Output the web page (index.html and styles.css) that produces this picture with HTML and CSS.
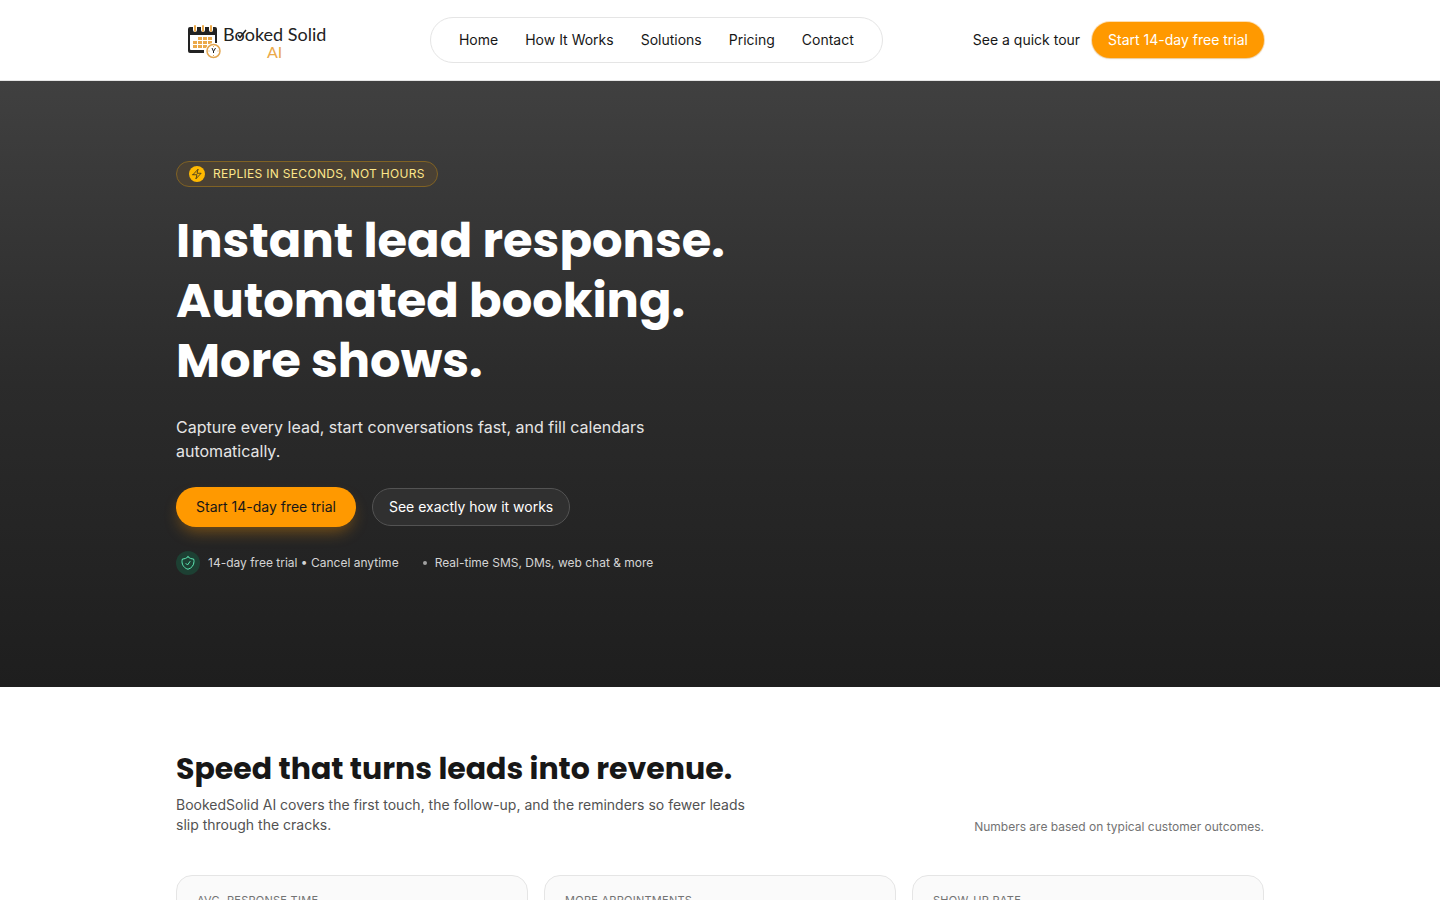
FILE: index.html
```html
<!DOCTYPE html>
<html lang="en">
<head>
    <meta charset="UTF-8">
    <meta name="viewport" content="width=device-width, initial-scale=1.0">
    <title>Booked Solid AI</title>
    <link rel="stylesheet" href="styles.css">
</head>
<body>
    <header class="site-header">
        <div class="container header-inner">
            <a class="logo" href="#" aria-label="Booked Solid AI">
                <svg width="164" height="48" viewBox="0 0 164 48">
                    <!-- calendar -->
                    <path d="M14 11h25a2 2 0 0 1 2 2v14h-2v-8H14v14a1 1 0 0 0 1 1h13v3H14a2 2 0 0 1-2-2V13a2 2 0 0 1 2-2z" fill="#222"/>
                    <path d="M19 9v5M27 9v5M35 9v5" stroke="#fff" stroke-width="4" stroke-linecap="round"/>
                    <path d="M19 10v5M27 10v5M35 10v5" stroke="#eba94a" stroke-width="2" stroke-linecap="round"/>
                    <path d="M22 21h4v3h-4zM27 21h4v3h-4zM32 21h4v3h-4zM17 25h4v3h-4zM22 25h4v3h-4zM27 25h4v3h-4zM32 25h4v3h-4zM17 29h4v3h-4zM22 29h4v3h-4zM27 29h4v3h-4z" fill="#eba94a"/>
                    <!-- clock -->
                    <circle cx="37.5" cy="35" r="8" fill="#fff"/>
                    <circle cx="37.5" cy="35" r="6.5" fill="#fff" stroke="#e3a650" stroke-width="1.5"/>
                    <path d="M37.5 30v1M37.5 39v1M32.5 35h1M41.5 35h1" stroke="#e3a650"/>
                    <path d="M36 32l1.5 3.5L39.5 32M37.5 35v2" fill="none" stroke="#222"/>
                    <text class="logo-name" x="47" y="25">Booked Solid</text>
                    <text class="logo-ai" x="91" y="42">AI</text>
                    <!-- tick in the first o -->
                    <path d="M62 19l2 2.5L70 14" fill="none" stroke="#222" stroke-width="1.5"/>
                </svg>
            </a>
            <nav class="main-nav">
                <a href="#">Home</a>
                <a href="#">How It Works</a>
                <a href="#">Solutions</a>
                <a href="#">Pricing</a>
                <a href="#">Contact</a>
            </nav>
            <div class="header-actions">
                <a class="tour-link" href="#">See a quick tour</a>
                <a class="btn btn-small" href="#">Start 14-day free trial</a>
            </div>
        </div>
    </header>

    <main>
        <section class="hero">
            <div class="container">
                <div class="badge">
                    <span class="badge-icon">
                        <svg width="12" height="12" viewBox="0 0 24 24" fill="none" stroke="currentColor" stroke-width="1.5" stroke-linecap="round" stroke-linejoin="round"><path d="m3.75 13.5 10.5-11.25L12 10.5h8.25L9.75 21.75 12 13.5H3.75z"/></svg>
                    </span>
                    <span>Replies in seconds, not hours</span>
                </div>
                <h1>Instant lead response.<br>Automated booking.<br>More shows.</h1>
                <p class="hero-text">Capture every lead, start conversations fast, and fill calendars automatically.</p>
                <div class="hero-actions">
                    <a class="btn btn-primary" href="#">Start 14-day free trial</a>
                    <a class="btn btn-outline" href="#">See exactly how it works</a>
                </div>
                <div class="trust">
                    <div class="trust-item">
                        <span class="shield">
                            <svg width="16" height="16" viewBox="0 0 24 24" fill="none" stroke="currentColor" stroke-width="1.5" stroke-linecap="round" stroke-linejoin="round"><path d="M12 2.7C9.8 4.8 6.8 6 3.6 6 3.2 7.2 3 8.5 3 9.75c0 5.6 3.8 10.3 9 11.6 5.2-1.3 9-6 9-11.6 0-1.3-.2-2.55-.6-3.75-3.2 0-6.2-1.2-8.4-3.3z"/><path d="M9 12.75 11.25 15 15 9.75"/></svg>
                        </span>
                        <span>14-day free trial • Cancel anytime</span>
                    </div>
                    <div class="trust-item">
                        <span class="dot"></span>
                        <span>Real-time SMS, DMs, web chat &amp; more</span>
                    </div>
                </div>
            </div>
        </section>

        <section class="stats">
            <div class="container">
                <div class="stats-head">
                    <div class="stats-intro">
                        <h2>Speed that turns leads into revenue.</h2>
                        <p>BookedSolid AI covers the first touch, the follow-up, and the reminders so fewer leads slip through the cracks.</p>
                    </div>
                    <p class="stats-note">Numbers are based on typical customer outcomes.</p>
                </div>
                <div class="cards">
                    <div class="card">Avg. response time</div>
                    <div class="card">More appointments</div>
                    <div class="card">Show-up rate</div>
                </div>
            </div>
        </section>
    </main>
</body>
</html>
```
FILE: styles.css
```css
* {
    box-sizing: border-box;
}

body {
    margin: 0;
    font-family: Inter, "Liberation Sans", sans-serif;
    font-size: 14px;
    line-height: 20px;
    color: #171717;
    background-color: #fff;
}

h1, h2, p {
    margin: 0;
}

a {
    color: inherit;
    text-decoration: none;
}

svg {
    display: block;
}

.container {
    max-width: 1152px;
    margin: 0 auto;
    padding: 0 32px;
}

/* Header */
.site-header {
    border-bottom: 1px solid #e5e5e5;
}

.header-inner {
    display: flex;
    align-items: center;
    justify-content: space-between;
    min-height: 80px;
}

.logo-name,
.logo-ai {
    font-family: Lato, sans-serif;
    font-size: 18px;
    fill: #222;
}

.logo-ai {
    font-size: 16px;
    fill: #eba94a;
}

.main-nav {
    display: flex;
    gap: 27px;
    padding: 12px 28px;
    border: 1px solid #e5e5e5;
    border-radius: 24px;
}

.header-actions {
    display: flex;
    align-items: center;
    gap: 12px;
}

.btn {
    display: inline-block;
    border-radius: 20px;
    padding: 8px 16px;
}

.btn-small {
    background-color: #ff9900;
    color: #fff;
    box-shadow: 0 1px 2px rgba(0, 0, 0, 0.1), 0 0 0 1px rgba(255, 153, 0, 0.3);
}

/* Hero */
.hero {
    padding: 80px 0 112px;
    background: linear-gradient(to bottom, #404040, #2b2b2b 50%, #1e1e1e);
    color: #fff;
}

.badge {
    display: flex;
    align-items: center;
    gap: 8px;
    width: fit-content;
    padding: 4px 12px;
    border: 1px solid #806224;
    border-radius: 13px;
    background-color: #4a4134;
    color: #fde68a;
    font-size: 12px;
    line-height: 16px;
    text-transform: uppercase;
    letter-spacing: 0.025em;
}

.badge-icon {
    display: grid;
    place-items: center;
    width: 16px;
    height: 16px;
    border-radius: 50%;
    background-color: #ffb900;
    color: #262626;
}

h1 {
    margin-top: 24px;
    font-family: Poppins, Inter, sans-serif;
    font-size: 48px;
    line-height: 60px;
    font-weight: 700;
}

.hero-text {
    max-width: 512px;
    margin-top: 24px;
    font-size: 16px;
    line-height: 24px;
    color: #e5e5e5;
}

.hero-actions {
    display: flex;
    flex-wrap: wrap;
    align-items: center;
    gap: 16px;
    margin-top: 24px;
}

.btn-primary {
    padding: 10px 20px;
    background-color: #ff9900;
    color: #171717;
    box-shadow: 0 8px 16px -4px rgba(255, 153, 0, 0.4);
}

.btn-outline {
    border: 1px solid #535353;
    background-color: #303030;
}

.trust {
    display: flex;
    flex-wrap: wrap;
    gap: 24px;
    margin-top: 24px;
    font-size: 12px;
    line-height: 16px;
    color: #d4d4d4;
}

.trust-item {
    display: flex;
    align-items: center;
    gap: 8px;
}

.shield {
    display: grid;
    place-items: center;
    width: 24px;
    height: 24px;
    border-radius: 50%;
    background-color: #1d4033;
    color: #5ee9b5;
}

.dot {
    width: 4px;
    height: 4px;
    border-radius: 50%;
    background-color: #a1a1a1;
}

/* Stats */
.stats {
    padding: 64px 0;
}

.stats-head {
    display: flex;
    align-items: flex-end;
    justify-content: space-between;
    gap: 24px;
}

.stats-intro {
    max-width: 576px;
}

h2 {
    font-family: Poppins, Inter, sans-serif;
    font-size: 30px;
    line-height: 36px;
    font-weight: 700;
}

.stats-intro p {
    margin-top: 8px;
    color: #525252;
}

.stats-note {
    font-size: 12px;
    line-height: 16px;
    color: #737373;
}

.cards {
    display: grid;
    grid-template-columns: repeat(3, 1fr);
    gap: 16px;
    margin-top: 40px;
}

.card {
    min-height: 128px;
    padding: 16px 20px;
    border: 1px solid #e5e5e5;
    border-radius: 16px;
    background-color: #fafafa;
    color: #737373;
    font-size: 11px;
    line-height: 16px;
    text-transform: uppercase;
    letter-spacing: 0.025em;
}
```
